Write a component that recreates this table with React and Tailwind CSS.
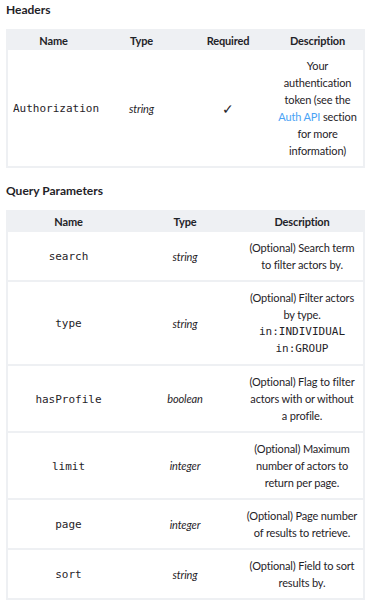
import React from 'react';

const sans = { fontFamily: 'Lato, "Noto Sans", sans-serif' };
const monoCls = "font-['DejaVu_Sans_Mono',monospace] text-[11px] tracking-normal text-[#1f2328]";

const Mono = ({ children }) => <span className={monoCls}>{children}</span>;

const headerRows = [
    {
        name: 'Authorization',
        type: 'string',
        required: true,
        desc: (
            <>
                Your authentication token (see the{' '}
                <a href="#" className="text-[#4aa3f5]">Auth API</a> section for more information)
            </>
        ),
    },
];

const queryRows = [
    { name: 'search', type: 'string', desc: '(Optional) Search term to filter actors by.' },
    {
        name: 'type',
        type: 'string',
        desc: (
            <>
                (Optional) Filter actors by type.
                <div className={`${monoCls} leading-[17px]`}>in:INDIVIDUAL</div>
                <div className={`${monoCls} leading-[17px]`}>in:GROUP</div>
            </>
        ),
    },
    { name: 'hasProfile', type: 'boolean', desc: '(Optional) Flag to filter actors with or without a\u00a0profile.' },
    { name: 'limit', type: 'integer', desc: '(Optional) Maximum number of actors to return per page.' },
    { name: 'page', type: 'integer', desc: '(Optional) Page number of results to retrieve.' },
    { name: 'sort', type: 'string', desc: '(Optional) Field to sort results by.' },
];

const Th = ({ children }) => (
    <th className="h-[20px] px-[5px] py-0 text-center text-[11px] font-bold text-[#1f2328]">{children}</th>
);

const Td = ({ children, className = '' }) => (
    <td className={`px-[5px] py-[7px] text-center align-middle ${className}`}>{children}</td>
);

const App = () => {
    return (
        <div className="min-h-[600px] bg-white px-[6px] pt-[1px] text-[11px] leading-[17px] tracking-[-0.15px] text-[#1f2328]" style={sans}>
            <h3 className="text-[12px] font-bold leading-[17px] tracking-normal">Headers</h3>

            <table className="mt-[11px] w-[357px] table-fixed border-collapse border-2 border-[#eef0f3]">
                <colgroup>
                    <col className="w-[92px]" />
                    <col className="w-[85px]" />
                    <col className="w-[88px]" />
                    <col className="w-[92px]" />
                </colgroup>
                <thead className="bg-[#eef0f3]">
                    <tr>
                        <Th>Name</Th>
                        <Th>Type</Th>
                        <Th>Required</Th>
                        <Th>Description</Th>
                    </tr>
                </thead>
                <tbody>
                    {headerRows.map((r) => (
                        <tr key={r.name}>
                            <Td><Mono>{r.name}</Mono></Td>
                            <Td className="italic">{r.type}</Td>
                            <Td className="text-[14px]">{r.required ? '✓' : ''}</Td>
                            <Td className="px-[4px]">{r.desc}</Td>
                        </tr>
                    ))}
                </tbody>
            </table>

            <h3 className="mt-[14px] text-[12px] font-bold leading-[17px] tracking-normal">Query Parameters</h3>

            <table className="mt-[11px] w-[357px] table-fixed border-collapse border-2 border-[#eef0f3]">
                <colgroup>
                    <col className="w-[122px]" />
                    <col className="w-[112px]" />
                    <col className="w-[123px]" />
                </colgroup>
                <thead className="bg-[#eef0f3]">
                    <tr>
                        <Th>Name</Th>
                        <Th>Type</Th>
                        <Th>Description</Th>
                    </tr>
                </thead>
                <tbody>
                    {queryRows.map((r) => (
                        <tr key={r.name} className="border-t-2 border-[#eef0f3]">
                            <Td><Mono>{r.name}</Mono></Td>
                            <Td className="italic">{r.type}</Td>
                            <Td className="px-[4px]">{r.desc}</Td>
                        </tr>
                    ))}
                </tbody>
            </table>
        </div>
    );
};

export default App;
